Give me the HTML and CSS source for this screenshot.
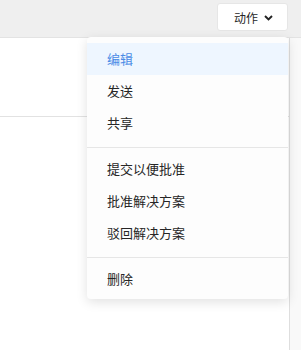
FILE: index.html
```html
<!DOCTYPE html>
<html lang="zh-CN">
<head>
  <meta charset="UTF-8" />
  <title>动作</title>
  <link rel="stylesheet" href="styles.css">
</head>
<body>

  <header class="topbar">
    <div class="actions">
      <button class="actions-btn" type="button">
        动作
        <svg class="chevron" width="9" height="6" viewBox="0 0 9 6">
          <path d="M1 1l3.5 3.5L8 1" fill="none" stroke="#222" stroke-width="1.9" />
        </svg>
      </button>

      <ul class="menu">
        <li class="menu-item active">编辑</li>
        <li class="menu-item">发送</li>
        <li class="menu-item">共享</li>
        <li class="menu-divider"></li>
        <li class="menu-item">提交以便批准</li>
        <li class="menu-item">批准解决方案</li>
        <li class="menu-item">驳回解决方案</li>
        <li class="menu-divider"></li>
        <li class="menu-item">删除</li>
      </ul>
    </div>
  </header>

  <div class="page">
    <main class="content">
      <section class="block"></section>
      <section class="block"></section>
    </main>
    <aside class="side"></aside>
  </div>

</body>
</html>
```

FILE: styles.css
```css
body {
  font-family: 'Noto Sans CJK SC', 'Noto Sans', sans-serif;
  background: #fff;
  margin: 0;
  padding: 0;
  color: #262626;
}
.topbar {
  background: #efefef;
  height: 37px;
  border-bottom: 1px solid #e3e3e3;
  display: flex;
  justify-content: flex-end;
  padding-right: 13px;
}
.actions {
  position: relative;
  margin-top: 3px;
}
.actions-btn {
  width: 71px;
  height: 28px;
  background: #fff;
  border: 1px solid #e6e6e6;
  border-radius: 3px;
  font-family: inherit;
  font-size: 12px;
  color: #262626;
  display: flex;
  align-items: center;
  justify-content: center;
  gap: 6px;
  padding: 0 0 0 2px;
}
.chevron {
  margin-top: 1px;
}
.menu {
  position: absolute;
  top: 34px;
  right: 0;
  width: 201px;
  margin: 0;
  padding: 6px 0 4px;
  list-style: none;
  background: #fdfdfd;
  border-radius: 4px;
  box-shadow: 0 3px 12px rgba(0,0,0,0.12);
  z-index: 10;
}
.menu-item {
  height: 32px;
  line-height: 32px;
  padding-left: 20px;
  font-size: 13px;
  color: #262626;
}
.menu-item.active {
  background: #eef6ff;
  color: #4a8be6;
}
.menu-divider {
  height: 1px;
  background: #e6e6e6;
  margin: 8px 0 5px;
}
.page {
  display: flex;
  height: 312px;
}
.content {
  flex: 1;
  border-right: 1px solid #dedede;
}
.block {
  height: 78px;
  border-bottom: 1px solid #e2e2e2;
}
.block + .block {
  border-bottom: none;
}
.side {
  width: 11px;
  background: #f9f9f9;
}
```
